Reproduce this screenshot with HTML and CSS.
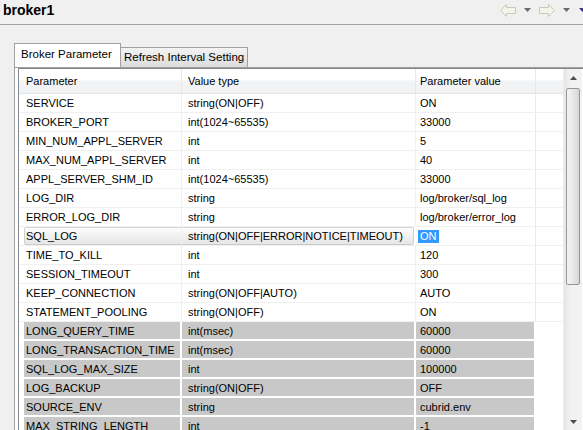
FILE: index.html
```html
<!DOCTYPE html>
<html lang="en">

<head>
   <meta charset="UTF-8">
   <meta name="viewport" content="width=device-width, initial-scale=1.0">
   <link rel="stylesheet" href="styles.css">
</head>

<body>
   <div class="titlebar">
      <span class="title">broker1</span>
      <div class="nav">
         <svg width="16" height="13" viewBox="0 0 16 13">
            <path d="M0.5 6.5 L6.5 0.5 L6.5 3.5 L15.5 3.5 L15.5 9.5 L6.5 9.5 L6.5 12.5 Z" fill="#f4f4e8" stroke="#c9c9bb" />
         </svg>
         <svg class="drop" width="7" height="4" viewBox="0 0 7 4">
            <path d="M0 0 L7 0 L3.5 4 Z" fill="#6a6a6a" />
         </svg>
         <svg width="16" height="13" viewBox="0 0 16 13">
            <path d="M15.5 6.5 L9.5 0.5 L9.5 3.5 L0.5 3.5 L0.5 9.5 L9.5 9.5 L9.5 12.5 Z" fill="#f4f4e8" stroke="#c9c9bb" />
         </svg>
         <svg class="drop" width="7" height="4" viewBox="0 0 7 4">
            <path d="M0 0 L7 0 L3.5 4 Z" fill="#6a6a6a" />
         </svg>
         <svg class="drop" width="7" height="4" viewBox="0 0 7 4">
            <path d="M0 0 L7 0 L3.5 4 Z" fill="#3a3a8c" />
         </svg>
      </div>
   </div>

   <div class="editor">
      <div class="tabs">
         <div class="tab active">Broker Parameter</div>
         <div class="tab">Refresh Interval Setting</div>
      </div>
      <div class="panel">
         <div class="table">
            <div class="grid">
               <div class="row head">
                  <div class="cell c1">Parameter</div>
                  <div class="cell c2">Value type</div>
                  <div class="cell c3">Parameter value</div>
                  <div class="cell c4"></div>
               </div>
               <div class="row">
                  <div class="cell c1">SERVICE</div>
                  <div class="cell c2">string(ON|OFF)</div>
                  <div class="cell c3">ON</div>
                  <div class="cell c4"></div>
               </div>
               <div class="row">
                  <div class="cell c1">BROKER_PORT</div>
                  <div class="cell c2">int(1024~65535)</div>
                  <div class="cell c3">33000</div>
                  <div class="cell c4"></div>
               </div>
               <div class="row">
                  <div class="cell c1">MIN_NUM_APPL_SERVER</div>
                  <div class="cell c2">int</div>
                  <div class="cell c3">5</div>
                  <div class="cell c4"></div>
               </div>
               <div class="row">
                  <div class="cell c1">MAX_NUM_APPL_SERVER</div>
                  <div class="cell c2">int</div>
                  <div class="cell c3">40</div>
                  <div class="cell c4"></div>
               </div>
               <div class="row">
                  <div class="cell c1">APPL_SERVER_SHM_ID</div>
                  <div class="cell c2">int(1024~65535)</div>
                  <div class="cell c3">33000</div>
                  <div class="cell c4"></div>
               </div>
               <div class="row">
                  <div class="cell c1">LOG_DIR</div>
                  <div class="cell c2">string</div>
                  <div class="cell c3">log/broker/sql_log</div>
                  <div class="cell c4"></div>
               </div>
               <div class="row">
                  <div class="cell c1">ERROR_LOG_DIR</div>
                  <div class="cell c2">string</div>
                  <div class="cell c3">log/broker/error_log</div>
                  <div class="cell c4"></div>
               </div>
               <div class="row focus">
                  <div class="cell c1">SQL_LOG</div>
                  <div class="cell c2">string(ON|OFF|ERROR|NOTICE|TIMEOUT)</div>
                  <div class="cell c3"><span class="selected">ON</span></div>
                  <div class="cell c4"></div>
               </div>
               <div class="row">
                  <div class="cell c1">TIME_TO_KILL</div>
                  <div class="cell c2">int</div>
                  <div class="cell c3">120</div>
                  <div class="cell c4"></div>
               </div>
               <div class="row">
                  <div class="cell c1">SESSION_TIMEOUT</div>
                  <div class="cell c2">int</div>
                  <div class="cell c3">300</div>
                  <div class="cell c4"></div>
               </div>
               <div class="row">
                  <div class="cell c1">KEEP_CONNECTION</div>
                  <div class="cell c2">string(ON|OFF|AUTO)</div>
                  <div class="cell c3">AUTO</div>
                  <div class="cell c4"></div>
               </div>
               <div class="row">
                  <div class="cell c1">STATEMENT_POOLING</div>
                  <div class="cell c2">string(ON|OFF)</div>
                  <div class="cell c3">ON</div>
                  <div class="cell c4"></div>
               </div>
               <div class="row gray">
                  <div class="cell c1">LONG_QUERY_TIME</div>
                  <div class="cell c2">int(msec)</div>
                  <div class="cell c3">60000</div>
                  <div class="cell c4"></div>
               </div>
               <div class="row gray">
                  <div class="cell c1">LONG_TRANSACTION_TIME</div>
                  <div class="cell c2">int(msec)</div>
                  <div class="cell c3">60000</div>
                  <div class="cell c4"></div>
               </div>
               <div class="row gray">
                  <div class="cell c1">SQL_LOG_MAX_SIZE</div>
                  <div class="cell c2">int</div>
                  <div class="cell c3">100000</div>
                  <div class="cell c4"></div>
               </div>
               <div class="row gray">
                  <div class="cell c1">LOG_BACKUP</div>
                  <div class="cell c2">string(ON|OFF)</div>
                  <div class="cell c3">OFF</div>
                  <div class="cell c4"></div>
               </div>
               <div class="row gray">
                  <div class="cell c1">SOURCE_ENV</div>
                  <div class="cell c2">string</div>
                  <div class="cell c3">cubrid.env</div>
                  <div class="cell c4"></div>
               </div>
               <div class="row gray">
                  <div class="cell c1">MAX_STRING_LENGTH</div>
                  <div class="cell c2">int</div>
                  <div class="cell c3">-1</div>
                  <div class="cell c4"></div>
               </div>
            </div>
            <div class="scrollbar">
               <div class="arrow">
                  <svg width="7" height="4" viewBox="0 0 7 4"><path d="M3.5 0 L7 4 L0 4 Z" fill="#4d4d4d" /></svg>
               </div>
               <div class="thumb"></div>
               <div class="track"></div>
               <div class="arrow">
                  <svg width="7" height="4" viewBox="0 0 7 4"><path d="M0 0 L7 0 L3.5 4 Z" fill="#4d4d4d" /></svg>
               </div>
            </div>
         </div>
      </div>
   </div>
</body>

</html>
```

FILE: styles.css
```css
body {
   margin: 0;
   height: 430px;
   overflow: hidden;
   background-color: #f0f0f0;
   font-family: "Liberation Sans", Arial, sans-serif;
   font-size: 11px;
   color: #000;
}

.titlebar {
   display: flex;
   align-items: center;
   justify-content: space-between;
   height: 24px;
   border-bottom: 1px solid #a0a0a0;
   padding-left: 3px;
}

.title {
   font-size: 14px;
   font-weight: bold;
   margin-top: -4px;
}

.nav {
   display: flex;
   align-items: center;
   gap: 7px;
   margin-top: -4px;
   margin-right: -4px;
}

.nav .drop {
   margin-left: 1px;
   margin-right: 1px;
}

.editor {
   padding-top: 19px;
   padding-left: 14px;
}

.tabs {
   display: flex;
   align-items: flex-end;
   height: 23px;
}

.tab {
   box-sizing: border-box;
   height: 20px;
   line-height: 19px;
   padding: 0 3px;
   font-size: 11.5px;
   white-space: nowrap;
   border: 1px solid #a0a0a0;
   border-bottom: none;
   border-left: none;
   background: linear-gradient(#f3f3f3, #dcdcdc);
   width: 127px;
}

.tab.active {
   height: 24px;
   line-height: 21px;
   width: 107px;
   padding: 0 6px;
   border-left: 1px solid #a0a0a0;
   background: #fff;
   position: relative;
   z-index: 1;
}

.panel {
   border-top: 1px solid #a0a0a0;
   border-left: 1px solid #a0a0a0;
   background-color: #fff;
   padding: 0 0 0 3px;
}

.table {
   display: flex;
   border: 1px solid #828790;
   border-right: none;
   background-color: #fff;
}

.grid {
   width: 544px;
}

.row {
   display: flex;
   box-sizing: border-box;
   height: 19px;
   padding-left: 5px;
   border-bottom: 1px solid #f0f0f0;
}

.cell {
   box-sizing: border-box;
   height: 18px;
   line-height: 19px;
   white-space: nowrap;
   overflow: hidden;
   border-right: 1px solid #f0f0f0;
}

.c1 {
   width: 158px;
   padding-left: 2px;
}

.c2 {
   width: 234px;
   padding-left: 6px;
}

.c3 {
   width: 120px;
   padding-left: 4px;
   border-right-color: #e2eaf4;
}

.c4 {
   flex: 1;
   border-right: none;
}

.row.head {
   height: 25px;
   padding-left: 0;
   background: linear-gradient(#ffffff 45%, #f3f4f6 50%, #f1f2f4);
   border-bottom: 1px solid #e5e5e5;
}

.row.head .cell {
   height: 24px;
   line-height: 25px;
   border-right-color: #e8e8e8;
}

.row.head .c1 {
   width: 163px;
   padding-left: 7px;
}

.row.gray {
   border-bottom-color: #fff;
}

.row.gray .cell {
   height: 18px;
   line-height: 18px;
   border-bottom: 1px solid #fff;
   border-right: 2px solid #fff;
   background-color: #c8c8c8;
}

.row.gray .c4 {
   background-color: #fff;
   border-right: none;
}

.row.focus .c1,
.row.focus .c2 {
   background: linear-gradient(#fcfcfc, #e6e6e6);
   border-top: 1px solid #d6d6d6;
   border-bottom: 1px solid #cacaca;
   line-height: 17px;
}

.row.focus .c1 {
   border-left: 1px solid #d0d0d0;
   border-radius: 2px 0 0 2px;
   padding-left: 1px;
}

.row.focus .c2 {
   border-right: 1px solid #d0d0d0;
   border-radius: 0 2px 2px 0;
   width: 232px;
   margin-right: 2px;
}

.selected {
   display: inline-block;
   line-height: 13px;
   padding: 0 2px;
   margin-left: -2px;
   background-color: #3399ff;
   color: #fff;
}

.scrollbar {
   display: flex;
   flex-direction: column;
   width: 18px;
   height: 362px;
   background: linear-gradient(90deg, #e6e6e6, #f2f2f2 40%, #f2f2f2);
   border-left: 1px solid #ededed;
}

.arrow {
   display: flex;
   align-items: center;
   justify-content: center;
   height: 18px;
}

.thumb {
   box-sizing: border-box;
   height: 197px;
   margin: 1px 2px 0 2px;
   border: 1px solid #979797;
   border-radius: 2px;
   background: linear-gradient(90deg, #f4f4f4, #e8e8e8 50%, #d6d6d6);
}

.track {
   flex: 1;
}
```
